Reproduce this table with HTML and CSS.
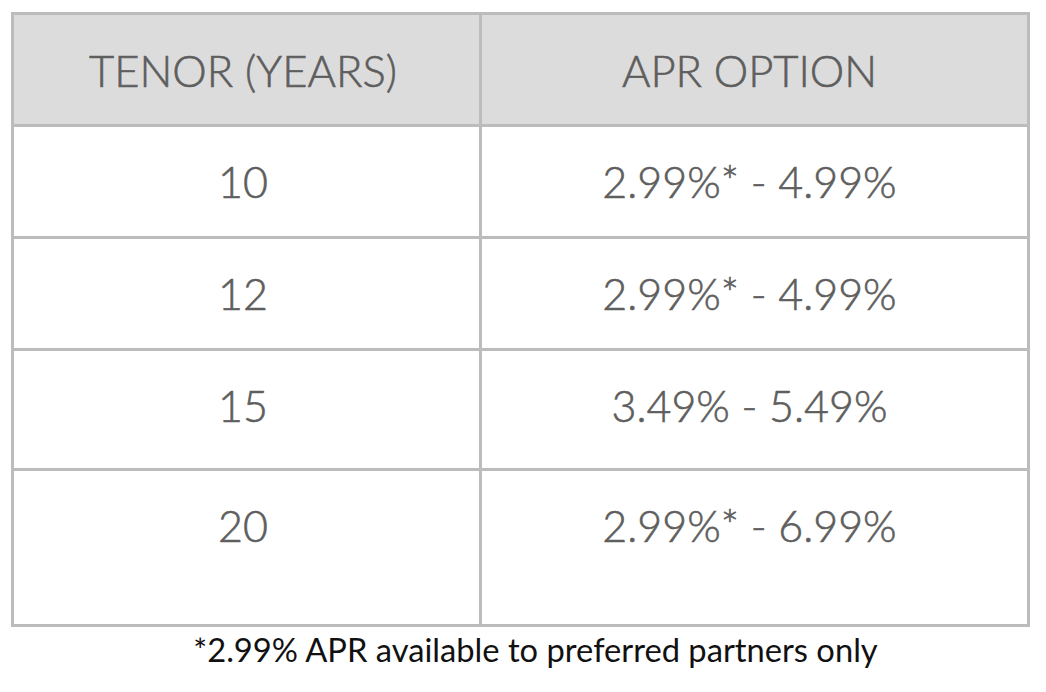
FILE: index.html
```html
<!DOCTYPE html>
<html>
<head>
<meta charset="utf-8">
<link rel="stylesheet" href="styles.css">
</head>
<body>
<div class="page">
  <div class="table">
    <div class="cell head c1">TENOR (YEARS)</div>
    <div class="cell head c2">APR OPTION</div>
    <div class="cell c1">10</div>
    <div class="cell c2">2.99%* - 4.99%</div>
    <div class="cell c1">12</div>
    <div class="cell c2">2.99%* - 4.99%</div>
    <div class="cell c1">15</div>
    <div class="cell c2">3.49% - 5.49%</div>
    <div class="cell c1">20</div>
    <div class="cell c2">2.99%* - 6.99%</div>
  </div>
  <p class="note">*2.99% APR available to preferred partners only</p>
</div>
</body>
</html>
```
FILE: styles.css
```css
html, body {
  margin: 0;
  padding: 0;
  background: #ffffff;
}
.page {
  padding: 12px 0 0 11px;
  width: 1019px;
}
.table {
  display: grid;
  grid-template-columns: 465px 545px;
  grid-template-rows: 109px 109px 109px 117px 153px;
  gap: 3px;
  padding: 3px;
  background: #bcbcbc;
}
.cell {
  background: #ffffff;
  color: #5e5e5e;
  font-family: Lato, "Noto Sans", sans-serif;
  font-weight: 300;
  font-size: 43px;
  text-align: center;
  padding-top: 32px;
  line-height: 46px;
  box-sizing: border-box;
  -webkit-text-stroke: 0.6px #5e5e5e;
}
.c1 {
  padding-right: 7px;
}
.c2 {
  padding-right: 10px;
}
.head {
  background: #dcdcdc;
  display: flex;
  align-items: center;
  justify-content: center;
  padding-top: 0;
  font-size: 43.5px;
}
.note {
  margin: 3px 0 0 0;
  padding-left: 30px;
  text-align: center;
  font-family: Lato, "Noto Sans", sans-serif;
  font-size: 32.7px;
  line-height: 40px;
  color: #111111;
}
```
